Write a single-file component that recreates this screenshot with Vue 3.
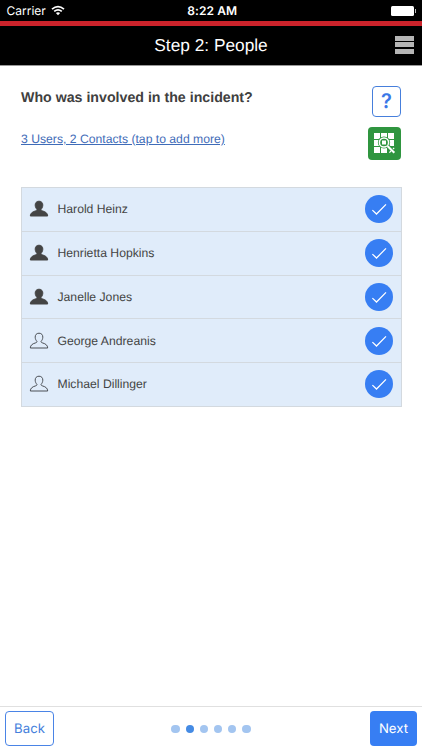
<script setup>
const people = [
  { name: 'Harold Heinz', user: true },
  { name: 'Henrietta Hopkins', user: true },
  { name: 'Janelle Jones', user: true },
  { name: 'George Andreanis', user: false },
  { name: 'Michael Dillinger', user: false },
]
const steps = 6
const current = 2
</script>

<template>
  <div class="screen">
    <div class="status">
      <div class="carrier">
        <span>Carrier</span>
        <svg class="wifi" viewBox="0 0 14 11" width="14" height="11">
          <path d="M1 4.2Q7-.9 13 4.2M3.2 6.4Q7 3.2 10.8 6.4" fill="none" stroke="#fff" stroke-width="1.7" />
          <path d="M4.9 8Q7 6.3 9.1 8L7 10.2Z" fill="#fff" />
        </svg>
      </div>
      <span class="time">8:22 AM</span>
      <div class="battery"><span class="cell"></span><span class="tip"></span></div>
    </div>
    <header class="header">
      <span></span>
      <h1>Step 2: People</h1>
      <button class="menu" aria-label="Menu"><i></i><i></i><i></i></button>
    </header>
    <main>
      <div class="intro">
        <div class="copy">
          <h2>Who was involved in the incident?</h2>
          <a class="add">3 Users, 2 Contacts (tap to add more)</a>
        </div>
        <div class="tools">
          <button class="help">?</button>
          <button class="scan" aria-label="Search grid">
            <svg viewBox="0 0 33 33" width="33" height="33">
              <g fill="#fff">
                <rect x="6" y="6" width="6" height="6" /><rect x="13" y="6" width="6" height="6" /><rect x="20" y="6" width="6" height="6" />
                <rect x="6" y="13" width="6" height="6" /><rect x="20" y="13" width="6" height="6" />
                <rect x="6" y="20" width="6" height="6" /><rect x="13" y="20" width="6" height="6" />
              </g>
              <circle cx="16" cy="15.5" r="6.1" fill="#2f953f" />
              <circle cx="16" cy="15.5" r="4.6" fill="#2f953f" stroke="#fff" stroke-width="1.5" />
              <rect x="14" y="13.5" width="4" height="4" fill="#fff" />
              <path d="M19.5 19L26 25.5" stroke="#2f953f" stroke-width="4" />
              <path d="M19.5 19L26.3 25.8" stroke="#fff" stroke-width="2.1" />
              <path d="M21.4 25.6L23 24M25 22L26.2 20.8" stroke="#fff" stroke-width="1.2" />
            </svg>
          </button>
        </div>
      </div>
      <ul class="list">
        <li v-for="p in people" :key="p.name">
          <svg class="person" :class="{ solid: p.user }" viewBox="0 0 20 18" width="20" height="18">
            <path d="M10 1.2C7.4 1.2 6.1 3 6.2 5.2C6.3 7.2 7 8.4 7.9 9.2C8.1 10.2 7.6 10.6 6.2 11C3.4 11.8 1.4 13.2 1.3 16H18.7C18.6 13.2 16.6 11.8 13.8 11C12.4 10.6 11.9 10.2 12.1 9.2C13 8.4 13.7 7.2 13.8 5.2C13.9 3 12.6 1.2 10 1.2Z" />
          </svg>
          <span class="name">{{ p.name }}</span>
          <span class="check">
            <svg viewBox="0 0 28 28" width="28" height="28"><path d="M7.4 15.1L11.5 19L21 9.4" fill="none" stroke="#fff" stroke-width="1.25" /></svg>
          </span>
        </li>
      </ul>
    </main>
    <footer>
      <button class="back">Back</button>
      <div class="dots"><i v-for="n in steps" :key="n" :class="{ on: n === current }"></i></div>
      <button class="next">Next</button>
    </footer>
  </div>
</template>

<style>
body { margin: 0; background: #fff; }
</style>

<style scoped>
* { box-sizing: border-box; }
.screen { height: 750px; display: flex; flex-direction: column; overflow: hidden; background: #fff; color: #444; font-family: "Liberation Sans", Arial, sans-serif; text-rendering: geometricPrecision; }
button { padding: 0; border: 0; background: none; font-family: inherit; text-rendering: inherit; }
.status { height: 21px; flex: none; display: grid; grid-template-columns: 1fr auto 1fr; align-items: center; padding: 1px 6px 0 6.5px; background: #000; color: #fff; font: 12px/20px Inter, sans-serif; }
.carrier { display: flex; align-items: center; gap: 5px; }
.wifi { display: block; margin-bottom: 1px; }
.time { font-weight: 600; padding-left: 2px; letter-spacing: .1px; }
.battery { display: flex; align-items: center; justify-content: flex-end; gap: 1px; }
.cell { width: 23px; height: 10px; border-radius: 1.5px; background: #fff; }
.tip { width: 1px; height: 4px; background: #bbb; }
.header { height: 45px; flex: none; display: grid; grid-template-columns: 1fr auto 1fr; align-items: center; padding: 0 8px 2px; border-top: 5px solid #cb232b; border-bottom: 1px solid #999; background: #000; }
h1 { margin: 1px 0 0; color: #fff; font-size: 17.3px; font-weight: 400; line-height: 22px; }
.menu { justify-self: end; display: flex; flex-direction: column; gap: 1.5px; width: 19px; }
.menu i { height: 5px; background: #b5b5b5; }
main { flex: 1; padding: 20px 21px 0; }
.intro { display: flex; justify-content: space-between; height: 100.5px; }
.copy { display: flex; flex-direction: column; align-items: flex-start; }
h2 { margin: 2px 0 0; font-size: 14.2px; line-height: 20px; font-weight: 700; color: #404040; }
.add { margin-top: 22px; color: #3f6cb8; font-size: 12.2px; line-height: 18px; text-decoration: underline; }
.tools { display: flex; flex-direction: column; align-items: flex-end; gap: 10px; }
.help { width: 29px; height: 31px; border: 1px solid #467fdc; border-radius: 4px; color: #3b78e7; font: 600 20px/29px Inter, sans-serif; }
.scan { width: 33px; height: 33px; border-radius: 4px; background: #2f953f; }
.scan svg { display: block; }
.list { list-style: none; margin: 0; padding: 0; border: 1px solid #d3d9df; width: 380.5px; height: 220px; display: grid; grid-template-rows: repeat(5, 1fr); background: #e0ecfa; }
li { display: flex; align-items: center; padding: 0 7.5px 0 7px; }
li + li { border-top: 1px solid #d3d9df; }
.person { fill: none; stroke: #4b4f55; stroke-width: 1; margin-right: 8.5px; }
.person.solid { fill: #444; stroke: #444; }
.name { flex: 1; font-size: 12.2px; line-height: 18px; }
.check { width: 28px; height: 28px; border-radius: 50%; background: #377ef3; }
.check svg { display: block; }
footer { height: 44px; flex: none; display: flex; justify-content: space-between; align-items: flex-start; padding: 4px 5px 0; border-top: 1px solid #e0e0e0; }
.back, .next { font: 400 13.2px/32px Inter, sans-serif; border-radius: 4px; height: 35px; }
.back { width: 49px; border: 1px solid #4a84e6; color: #467fdc; }
.next { width: 47px; background: #377ef3; color: #fff; }
.dots { display: flex; gap: 6px; margin: 14px 2px 0 0; }
.dots i { width: 8.2px; height: 8.2px; border-radius: 50%; background: #a3c5f0; }
.dots i.on { background: #458be4; }
</style>
